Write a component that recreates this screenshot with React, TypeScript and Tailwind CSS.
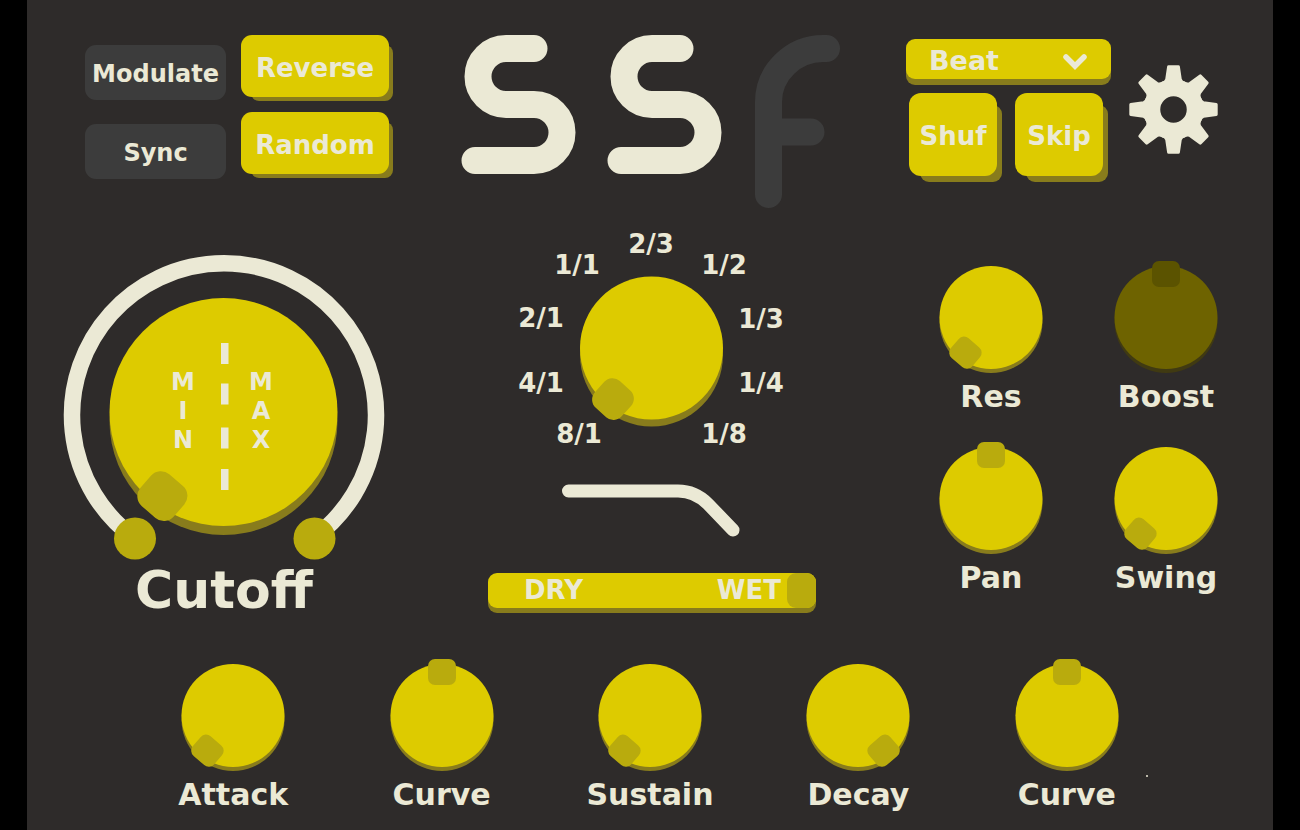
import { useId, useState } from "react";

type KnobProps = { label: string; angle: number; disabled?: boolean };

function Knob({ label, angle, disabled = false }: KnobProps) {
  const id = useId();
  const [value, setValue] = useState(angle);
  return (
    <div className="flex flex-col items-center gap-[6px]">
      <div className="relative">
        <svg viewBox="0 0 104 113" className="block h-[113px] w-[104px]" aria-hidden="true">
          <circle cx="52" cy="61.5" r="51.5" className={disabled ? "fill-[#403a12]" : "fill-[#887c1c]"} />
          <circle cx="52" cy="57.5" r="51.5" className={disabled ? "fill-[#6e6300]" : "fill-[#ddcb00]"} />
          <rect
            x="38"
            y="1"
            width="28"
            height="26"
            rx="7"
            transform={`rotate(${value} 52 57.5) rotate(${-value / 30} 52 14)`}
            className={disabled ? "fill-[#5b5300]" : "fill-[#b9ab0d]"}
          />
        </svg>
        <input
          id={id}
          type="range"
          min={-144}
          max={144}
          value={value}
          disabled={disabled}
          onChange={(e) => setValue(Number(e.target.value))}
          className="absolute inset-0 h-full w-full cursor-pointer opacity-0"
        />
      </div>
      <label htmlFor={id} className="text-[30px] leading-9">
        {label}
      </label>
    </div>
  );
}

function FlatButton({ label }: { label: string }) {
  return (
    <button type="button" className="h-[55px] w-[141px] rounded-[11px] bg-[#3c3c3c] pt-[2px] text-2xl">
      {label}
    </button>
  );
}

function RaisedButton({ label }: { label: string }) {
  return (
    <button
      type="button"
      className="h-[62px] w-[148px] rounded-[11px] bg-[#ddcb00] pt-[4px] text-[26px] shadow-[7px_7px_0_-3px_#887c1c]"
    >
      {label}
    </button>
  );
}

function SquareButton({ label }: { label: string }) {
  return (
    <button
      type="button"
      className="h-[83px] w-[88px] rounded-[12px] bg-[#ddcb00] pt-[4px] text-[26px] shadow-[8px_9px_0_-3px_#887c1c]"
    >
      {label}
    </button>
  );
}

function Logo() {
  return (
    <svg viewBox="0 0 380 174" className="h-[174px] w-[380px]" role="img" aria-label="SSF">
      <g fill="none" strokeWidth="27" strokeLinecap="round">
        <path
          className="stroke-[#ebe9d5]"
          d="M73 14H45a28 28 0 0 0 0 56H73a28 28 0 0 1 0 56H14"
          transform="translate(0 -0.5)"
        />
        <path
          className="stroke-[#ebe9d5]"
          d="M219 14H191a28 28 0 0 0 0 56H219a28 28 0 0 1 0 56H160"
          transform="translate(0 -0.5)"
        />
        <path className="stroke-[#3c3c3c]" d="M307.500 159.500V67C307.500 37 333 13.500 362 13.500H365.500M307.500 97H350" />
      </g>
    </svg>
  );
}

function Gear() {
  const teeth = [0, 45, 90, 135, 180, 225, 270, 315];
  return (
    <svg viewBox="-44.500 -44.500 89 89" className="h-[89px] w-[89px]" aria-hidden="true">
      {teeth.map((a) => (
        <path
          key={a}
          transform={`rotate(${a})`}
          className="fill-[#ebe9d5] stroke-[#ebe9d5]"
          strokeWidth="3"
          strokeLinejoin="round"
          d="M-11.500 -26Q-7.500 -27.500 -6.800 -30L-4.900 -42.700H4.900L6.800 -30Q7.500 -27.500 11.500 -26Z"
        />
      ))}
      <circle r="21.500" fill="none" strokeWidth="16.500" className="stroke-[#ebe9d5]" />
    </svg>
  );
}

function CutoffDial() {
  const [value, setValue] = useState(-144);
  return (
    <div className="flex flex-col items-center">
      <div className="relative">
        <svg viewBox="63 255 322 306" className="block h-[306px] w-[322px]" aria-hidden="true">
          <path
            d="M135 538.500A152 152 0 1 1 313 538.500"
            fill="none"
            strokeWidth="16.500"
            className="stroke-[#ebe9d5]"
          />
          <circle cx="223.500" cy="421" r="114" className="fill-[#887c1c]" />
          <circle cx="223.500" cy="412" r="114" className="fill-[#ddcb00]" />
          <g className="fill-[#b9ab0d]">
            <circle cx="135" cy="538.500" r="21" />
            <circle cx="314.500" cy="538.500" r="21" />
            <rect
              x="201.500"
              y="287"
              width="44"
              height="42"
              rx="13"
              transform={`rotate(${value} 223.5 412) rotate(${-value / 30} 223.5 308)`}
            />
          </g>
          <g className="fill-[#ebe9d5]">
            <rect x="221" y="343" width="7.500" height="21" />
            <rect x="221" y="383.500" width="7.500" height="21" />
            <rect x="221" y="427.500" width="7.500" height="21" />
            <rect x="221" y="469" width="7.500" height="21" />
          </g>
          <g className="fill-[#ebe9d5] text-2xl" textAnchor="middle">
            <text x="183" y="390">M</text>
            <text x="183" y="419">I</text>
            <text x="183" y="448">N</text>
            <text x="261" y="390">M</text>
            <text x="261" y="419">A</text>
            <text x="261" y="448">X</text>
          </g>
        </svg>
        <input
          id="cutoff"
          type="range"
          min={-144}
          max={144}
          value={value}
          onChange={(e) => setValue(Number(e.target.value))}
          className="absolute inset-0 h-full w-full cursor-pointer opacity-0"
        />
      </div>
      <label htmlFor="cutoff" className="text-[52px] leading-[58px]">
        Cutoff
      </label>
    </div>
  );
}

const divisions = [
  { text: "8/1", x: 579, y: 443 },
  { text: "4/1", x: 541, y: 392 },
  { text: "2/1", x: 541, y: 327 },
  { text: "1/1", x: 577, y: 274 },
  { text: "2/3", x: 651, y: 253 },
  { text: "1/2", x: 724, y: 274 },
  { text: "1/3", x: 761, y: 328 },
  { text: "1/4", x: 761, y: 392 },
  { text: "1/8", x: 724, y: 443 },
];

function DivisionDial() {
  const [step, setStep] = useState(0);
  return (
    <div className="relative">
      <svg viewBox="488 230 328 220" className="block h-[220px] w-[328px]" aria-hidden="true">
        <circle cx="651.500" cy="355" r="71.500" className="fill-[#887c1c]" />
        <circle cx="651.500" cy="348" r="71.500" className="fill-[#ddcb00]" />
        <rect
          x="633.500"
          y="266"
          width="36"
          height="36"
          rx="11"
          transform={`rotate(${-143 + step * 36} 651.5 348) rotate(${5 - step * 1.25} 651.5 284)`}
          className="fill-[#b9ab0d]"
        />
        <g className="fill-[#ebe9d5] text-[26px]" textAnchor="middle">
          {divisions.map((d) => (
            <text key={d.text} x={d.x} y={d.y}>
              {d.text}
            </text>
          ))}
        </g>
      </svg>
      <input
        type="range"
        aria-label="Beat division"
        min={0}
        max={8}
        value={step}
        onChange={(e) => setStep(Number(e.target.value))}
        className="absolute inset-0 h-full w-full cursor-pointer opacity-0"
      />
    </div>
  );
}

function MixSlider() {
  const [mix, setMix] = useState(100);
  return (
    <div className="relative h-[35px] w-full rounded-[9px] bg-[#ddcb00] shadow-[0_5px_0_#887c1c]">
      <div className="flex h-full items-center justify-between pr-[35px] pb-[2px] pl-[36px] text-[26px] leading-none">
        <span>DRY</span>
        <span>WET</span>
      </div>
      <input
        type="range"
        aria-label="Dry / wet mix"
        min={0}
        max={100}
        value={mix}
        onChange={(e) => setMix(Number(e.target.value))}
        className="absolute inset-0 h-full w-full cursor-pointer appearance-none rounded-[9px] bg-transparent [&::-webkit-slider-thumb]:h-[35px] [&::-webkit-slider-thumb]:w-[29px] [&::-webkit-slider-thumb]:appearance-none [&::-webkit-slider-thumb]:rounded-[9px] [&::-webkit-slider-thumb]:bg-[#b9ab0d]"
      />
    </div>
  );
}

export default function App() {
  return (
    <div className="min-h-screen bg-black px-[27px] font-['DejaVu_Sans',sans-serif] font-bold text-[#ebe9d5]">
      <main className="min-h-screen bg-[#2e2b2a]">
        <header className="flex items-start justify-between pt-[35px] pr-[55px] pl-[58px]">
          <div className="flex gap-[15px]">
            <div className="flex flex-col gap-6 pt-[10px]">
              <FlatButton label="Modulate" />
              <FlatButton label="Sync" />
            </div>
            <div className="flex flex-col gap-[15px]">
              <RaisedButton label="Reverse" />
              <RaisedButton label="Random" />
            </div>
          </div>

          <div className="pl-[7px]">
            <Logo />
          </div>

          <div className="flex items-center gap-[18px] pt-1">
            <div className="flex flex-col gap-[14px]">
              <div className="relative">
                <select
                  aria-label="Mode"
                  className="block h-10 w-[205px] appearance-none rounded-[9px] bg-[#ddcb00] pt-[3px] pl-[23px] text-[27px] leading-9 shadow-[0_6px_0_#887c1c]"
                >
                  <option>Beat</option>
                  <option>Time</option>
                </select>
                <svg
                  viewBox="0 0 26 18"
                  className="pointer-events-none absolute top-[14px] right-[23px] h-[18px] w-[26px]"
                  aria-hidden="true"
                >
                  <path
                    d="M4 4L13 13L22 4"
                    fill="none"
                    strokeWidth="5.500"
                    strokeLinecap="round"
                    className="stroke-[#ebe9d5]"
                  />
                </svg>
              </div>
              <div className="flex gap-[18px] pl-[3px]">
                <SquareButton label="Shuf" />
                <SquareButton label="Skip" />
              </div>
            </div>
            <button type="button" aria-label="Settings" className="pt-1">
              <Gear />
            </button>
          </div>
        </header>

        <section className="grid grid-cols-[1fr_auto_1fr] items-start pt-[21px]">
          <div className="justify-self-start pt-[25px] pl-9">
            <CutoffDial />
          </div>

          <div className="flex flex-col items-center pl-1">
            <DivisionDial />
            <svg
              viewBox="563 484 178 54"
              className="mt-[34px] block h-[54px] w-[178px] overflow-visible"
              aria-hidden="true"
            >
              <path
                d="M568.500 491H678Q695 491 708 504L733 530"
                fill="none"
                strokeWidth="13"
                strokeLinecap="round"
                className="stroke-[#ebe9d5]"
              />
            </svg>
            <div className="mt-[35px] w-full">
              <MixSlider />
            </div>
          </div>

          <div className="grid grid-cols-[104px_104px] gap-x-[71px] gap-y-[26px] justify-self-end pt-[30px] pr-[55px]">
            <Knob label="Res" angle={-144} />
            <Knob label="Boost" angle={0} disabled />
            <Knob label="Pan" angle={0} />
            <Knob label="Swing" angle={-144} />
          </div>
        </section>

        <section className="relative grid grid-cols-5 px-[102px] pt-[39px]">
          <Knob label="Attack" angle={-144} />
          <Knob label="Curve" angle={0} />
          <Knob label="Sustain" angle={-144} />
          <Knob label="Decay" angle={144} />
          <Knob label="Curve" angle={0} />
          <span className="absolute top-[156px] right-[125px] size-[2px] rounded-full bg-[#ebe9d5]" />
        </section>
      </main>
    </div>
  );
}
